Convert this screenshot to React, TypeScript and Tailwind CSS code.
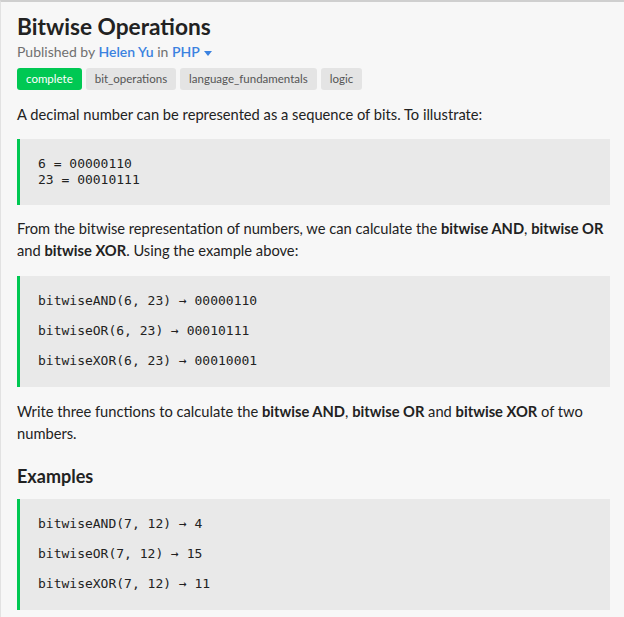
import React from 'react';

const lato = { fontFamily: 'Lato, "Open Sans", sans-serif' };

const Tag = ({ label, active }: { label: string; active?: boolean }) => (
  <span
    className={
      active
        ? 'h-[22px] px-[9px] rounded-[3px] bg-[#00c853] text-white text-[11.5px] leading-[22px]'
        : 'h-[22px] px-[9px] rounded-[3px] bg-[#e4e4e4] text-[#555] text-[11.5px] leading-[22px]'
    }
  >
    {label}
  </span>
);

const CodeBlock = ({ lines, className }: { lines: string[]; className?: string }) => (
  <div
    className={`border-l-[3px] border-[#00c853] bg-[#e9e9e9] pl-[18px] pt-[17px] pb-[18px] flex flex-col gap-[14px] font-['DejaVu_Sans_Mono',monospace] text-[13px] leading-[16px] text-[#222] ${className ?? ''}`}
  >
    {lines.map((l) => (
      <div key={l} className="whitespace-pre">{l}</div>
    ))}
  </div>
);

export default function App() {
  return (
    <div
      className="w-[624px] h-[617px] overflow-hidden bg-[#f7f7f7] border-t-2 border-l border-t-[#cfcfcf] border-l-[#e2e2e2]"
      style={lato}
    >
      <div className="pl-[16px] pt-[10px] w-[609px] text-[#222]">
        <h1 className="text-[22.7px] font-bold leading-[30px]">Bitwise Operations</h1>
        <div className="text-[14px] leading-[18px] text-[#707070] mt-[1px]">
          Published by <span className="text-[#3b82e0] font-semibold">Helen Yu</span> in{' '}
          <span className="text-[#3b82e0] font-semibold">PHP</span>
          <span className="inline-block ml-[4px] align-middle w-0 h-0 border-l-[4px] border-r-[4px] border-t-[5px] border-l-transparent border-r-transparent border-t-[#3b82e0]" />
        </div>
        <div className="flex gap-[4px] mt-[7px]">
          <Tag label="complete" active />
          <Tag label="bit_operations" />
          <Tag label="language_fundamentals" />
          <Tag label="logic" />
        </div>
        <p className="mt-[13px] text-[14.7px] leading-[22px]">
          A decimal number can be represented as a sequence of bits. To illustrate:
        </p>
        <div className="mt-[14px] border-l-[3px] border-[#00c853] bg-[#e9e9e9] pl-[18px] py-[17px] font-['DejaVu_Sans_Mono',monospace] text-[13px] leading-[16px] text-[#222]">
          <div className="whitespace-pre">6 = 00000110</div>
          <div className="whitespace-pre">23 = 00010111</div>
        </div>
        <p className="mt-[12px] text-[14.7px] leading-[22px]">
          From the bitwise representation of numbers, we can calculate the <b>bitwise AND</b>, <b>bitwise OR</b>{' '}
          and <b>bitwise XOR</b>. Using the example above:
        </p>
        <CodeBlock
          className="mt-[15px]"
          lines={['bitwiseAND(6, 23) → 00000110', 'bitwiseOR(6, 23) → 00010111', 'bitwiseXOR(6, 23) → 00010001']}
        />
        <p className="mt-[13px] text-[14.7px] leading-[22px]">
          Write three functions to calculate the <b>bitwise AND</b>, <b>bitwise OR</b> and <b>bitwise XOR</b> of two
          numbers.
        </p>
        <h2 className="mt-[20px] text-[18px] font-bold leading-[24px]">Examples</h2>
        <CodeBlock
          className="mt-[11px]"
          lines={['bitwiseAND(7, 12) → 4', 'bitwiseOR(7, 12) → 15', 'bitwiseXOR(7, 12) → 11']}
        />
      </div>
    </div>
  );
}
